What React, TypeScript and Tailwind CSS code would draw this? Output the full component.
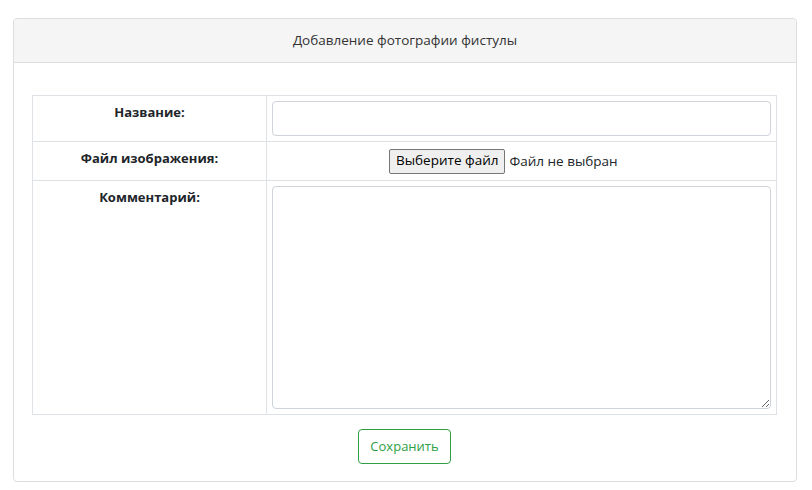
export default function App() {
  return (
    <div className="min-h-[490px] bg-white pl-[13px] pr-[15px] pt-[18px] pb-[8px] font-['Open_Sans',sans-serif] text-[#212529]">
      <div className="rounded-[4px] border border-[#dddddd] bg-white">
        {/* Header */}
        <div className="flex h-[44px] items-center justify-center rounded-t-[4px] border-b border-[#dddddd] bg-[#f5f5f5] text-[13.5px] text-[#333333]">
          Добавление фотографии фистулы
        </div>

        {/* Body */}
        <div className="pl-[18px] pr-[19px] pt-[32px] pb-[17px]">
          <table className="w-full border-collapse text-[13px]">
            <tbody>
              <tr>
                <td className="w-[234px] border border-[#dee2e6] px-[5px] pt-[5px] text-center align-top font-bold leading-[22px]">
                  Название:
                </td>
                <td className="border border-[#dee2e6] p-[5px]">
                  <input
                    type="text"
                    className="block h-[35px] w-full rounded-[4px] border border-[#ced4da] bg-white px-3 outline-none"
                  />
                </td>
              </tr>
              <tr>
                <td className="border border-[#dee2e6] px-[5px] pt-[5px] text-center align-top font-bold leading-[22px]">
                  Файл изображения:
                </td>
                <td className="h-[39px] border border-[#dee2e6] px-[5px] py-0">
                  <div className="flex justify-center">
                    <div className="flex w-[265px] items-center gap-[4px] text-[13.5px]">
                      <button className="h-[25px] rounded-[2px] border border-[#767676] bg-[#efefef] px-[6px] text-[13.5px] leading-none text-black">
                        Выберите файл
                      </button>
                      <span className="text-[#212529]">Файл не выбран</span>
                    </div>
                  </div>
                </td>
              </tr>
              <tr>
                <td className="border border-[#dee2e6] px-[5px] pt-[5px] text-center align-top font-bold leading-[22px]">
                  Комментарий:
                </td>
                <td className="border border-[#dee2e6] p-[5px]">
                  <textarea className="block h-[223px] w-full rounded-[4px] border border-[#ced4da] bg-white px-3 py-2 outline-none" />
                </td>
              </tr>
            </tbody>
          </table>

          <div className="mt-[14px] flex justify-center">
            <button className="h-[35px] w-[93px] rounded-[4px] border border-[#2f9e44] bg-white text-[13px] text-[#2f9e44]">
              Сохранить
            </button>
          </div>
        </div>
      </div>
    </div>
  );
}
